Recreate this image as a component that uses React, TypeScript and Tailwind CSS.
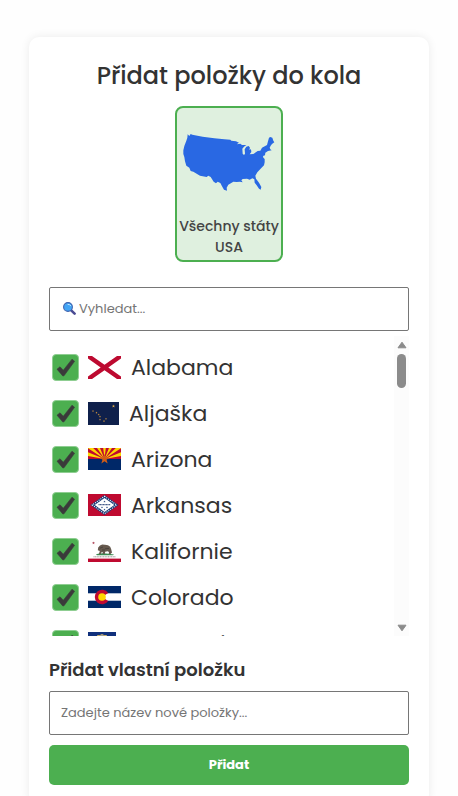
import { useState, type ReactNode } from "react";

function Star({ x, y, r, fill }: { x: number; y: number; r: number; fill: string }) {
  const points = Array.from({ length: 10 }, (_, i) => {
    const radius = i % 2 === 0 ? r : r * 0.4;
    const angle = (Math.PI / 5) * i - Math.PI / 2;
    return `${(x + radius * Math.cos(angle)).toFixed(2)},${(y + radius * Math.sin(angle)).toFixed(2)}`;
  }).join(" ");
  return <polygon points={points} fill={fill} />;
}

function Alabama() {
  return (
    <svg viewBox="0 0 33 23" className="h-[23px] w-[33px]" aria-hidden="true">
      <rect width="33" height="23" fill="#fff" />
      <path d="M0 0H4L16.5 8.8 29 0H33V2.6L20.3 11.5 33 20.4V23H29L16.5 14.2 4 23H0V20.4L12.7 11.5 0 2.6Z" fill="#bd0a30" />
    </svg>
  );
}

function Alaska() {
  const stars = [[5, 9], [8.5, 10.7], [10.7, 12.5], [12, 14.5], [12, 17.5], [18, 16.8], [16, 19.2]];
  return (
    <svg viewBox="0 0 31 23" className="h-[23px] w-[31px]" aria-hidden="true">
      <rect width="31" height="23" fill="#0f204b" />
      {stars.map(([x, y]) => (
        <Star key={`${x}-${y}`} x={x} y={y} r={1.1} fill="#d99a3c" />
      ))}
      <Star x={25.5} y={4.2} r={1.6} fill="#f0b84a" />
    </svg>
  );
}

function Arizona() {
  return (
    <svg viewBox="0 0 33 22" className="h-[22px] w-[33px]" aria-hidden="true">
      <rect width="33" height="11" fill="#bf0a30" />
      <path
        d="M16.5 11L0 8V4.2ZM16.5 11L0 .3V0H5.2ZM16.5 11L9 0H12ZM16.5 11L15.2 0H17.8ZM16.5 11L21 0H24ZM16.5 11L27.8 0H33V.3ZM16.5 11L33 4.2V8Z"
        fill="#fed700"
      />
      <rect y="11" width="33" height="11" fill="#002868" />
      <Star x={16.5} y={11.2} r={5.4} fill="#ce5c17" />
    </svg>
  );
}

function Arkansas() {
  return (
    <svg viewBox="0 0 33 22" className="h-[22px] w-[33px]" aria-hidden="true">
      <rect width="33" height="22" fill="#bf0a30" />
      <path d="M16.5 1L30.5 11 16.5 21 2.5 11Z" fill="#1c3c78" />
      <path d="M16.5 2.3L28.7 11 16.5 19.7 4.3 11Z" fill="none" stroke="#fff" strokeWidth="1.1" strokeDasharray="1 1.2" />
      <path d="M16.5 4L26.3 11 16.5 18 6.7 11Z" fill="#fff" />
      <path d="M10.5 10.7H22.5" stroke="#4a5f8c" strokeWidth="1.2" strokeDasharray="1.2 .3" />
      <Star x={16.5} y={7.6} r={1.2} fill="#1c3c78" />
      <Star x={14} y={13.3} r={1.1} fill="#1c3c78" />
      <Star x={19} y={13.3} r={1.1} fill="#1c3c78" />
      <Star x={16.5} y={15.5} r={1.1} fill="#1c3c78" />
    </svg>
  );
}

function California() {
  return (
    <svg viewBox="0 0 33 22" className="h-[22px] w-[33px]" aria-hidden="true">
      <rect width="33" height="22" fill="#fff" />
      <Star x={5.5} y={3} r={1.5} fill="#a3243b" />
      <path d="M8 14.2Q13 12.8 18 13.5T26 14.4L25 15.2H9Z" fill="#3c8a52" />
      <path
        d="M9.8 10.2L10.2 7.4 12 5.6 14.2 4.6 17 4.7 20 5.2 22.2 6.8 23.2 9.2 24 12.6 22.5 14H20.7L21 12 19.6 11.2 17.2 11.8 16.8 14H14.6L14.8 12 13.2 12.4 12.8 14.2H10.8L11.8 11Z"
        fill="#66594e"
      />
      <path d="M12 8.2L15 7M17 8.8L21 8.4M14 10H17" stroke="#3d3a35" strokeWidth=".7" />
      <path d="M5.5 16.8H27.5" stroke="#6d6561" strokeWidth="1" strokeDasharray="1.1 .5" opacity=".7" />
      <rect y="18.6" width="33" height="3.4" fill="#bf0a30" />
    </svg>
  );
}

function Colorado() {
  return (
    <svg viewBox="0 0 33 22" className="h-[22px] w-[33px]" aria-hidden="true">
      <rect width="33" height="22" fill="#002868" />
      <rect y="7.3" width="33" height="7.4" fill="#fff" />
      <path d="M20.2 7A7.3 7.3 0 1 0 20.2 15L14 11Z" fill="#bf0a30" />
      <circle cx="14" cy="11" r="3.8" fill="#ffd700" />
    </svg>
  );
}

function Connecticut() {
  return (
    <svg viewBox="0 0 28 22" className="h-[22px] w-[28px]" aria-hidden="true">
      <rect width="28" height="22" fill="#10307c" />
      <path d="M9.5 3.5Q12 4 14 2.5 16 4 18.5 3.5L19 11Q18 15 14 17 10 15 9 11Z" fill="#8f9bb5" stroke="#c9ae62" />
      <path d="M12 8H16M11 12H17" stroke="#4d7b3c" strokeWidth="2" />
      <path d="M6 18Q14 21 22 18" stroke="#fff" fill="none" />
    </svg>
  );
}

const states: { name: string; flag: ReactNode }[] = [
  { name: "Alabama", flag: <Alabama /> },
  { name: "Aljaška", flag: <Alaska /> },
  { name: "Arizona", flag: <Arizona /> },
  { name: "Arkansas", flag: <Arkansas /> },
  { name: "Kalifornie", flag: <California /> },
  { name: "Colorado", flag: <Colorado /> },
  { name: "Connecticut", flag: <Connecticut /> },
];

function StateRow({ name, flag }: { name: string; flag: ReactNode }) {
  const [checked, setChecked] = useState(true);
  return (
    <li>
      <label className="flex h-[46px] items-center pl-[3px] text-[22px]">
        <span className="grid shrink-0">
          <input
            type="checkbox"
            checked={checked}
            onChange={(e) => setChecked(e.target.checked)}
            className="peer col-start-1 row-start-1 size-[27px] appearance-none rounded-[4px] border border-[#8fce92] bg-white checked:bg-[#4caf50]"
          />
          <svg
            viewBox="0 0 27 27"
            className="pointer-events-none invisible col-start-1 row-start-1 size-[27px] peer-checked:visible"
            aria-hidden="true"
          >
            <path d="M5 15.2L8 12.8 11.3 16.2 20 5.2 22.6 7.3 12 21.8 10.8 22Z" fill="#3a3a3a" stroke="#3a3a3a" strokeWidth=".6" strokeLinejoin="round" />
          </svg>
        </span>
        <span className="ml-[9px] mr-[10px] shrink-0">{flag}</span>
        {name}
      </label>
    </li>
  );
}

function UsaMap() {
  return (
    <svg viewBox="65 111 288 180" className="h-[60px] w-[96px]" aria-hidden="true">
      <path
        d="M85 118L90 123 94 117 99 119 130 125 165 130 195 133 213 134 216 137 230 139 239 143 232 148 243 146 248 150 261 150 254 155 249 161 250 176 254 180 257 176 256 163 261 155 268 153 272 158 270 164 275 163 276 171 271 178 282 177 295 168 303 167 308 158 323 150 326 139 329 128 333 126 339 128 342 137 345 142 338 147 334 152 331 158 333 163 337 166 326 168 318 173 317 181 311 183 312 188 316 192 316 202 314 211 306 219 294 232 288 242 290 251 299 263 306 276 304 284 299 281 292 271 286 263 285 253 279 250 271 254 263 251 250 252 246 256 250 262 242 260 232 261 222 260 207 269 202 278 203 287 194 284 188 274 183 264 175 260 170 265 163 260 154 246 147 242 142 246 122 242 102 230 94 228 90 218 81 212 77 199 75 186 72 177 72 166 75 153 81 137 84 128Z"
        fill="#2968e3"
      />
    </svg>
  );
}

function Magnifier() {
  return (
    <svg viewBox="0 0 14 14" className="size-[14px]" aria-hidden="true">
      <path d="M9.2 8.4L12.6 11.6" stroke="#4b4b93" strokeWidth="2.6" strokeLinecap="round" />
      <circle cx="6" cy="5" r="4.4" fill="#42a5f5" stroke="#3f62ad" strokeWidth="1.1" />
      <path d="M6 2.3Q8 2.1 8.8 3.8" stroke="#c2e8ff" strokeWidth="1" fill="none" strokeLinecap="round" />
    </svg>
  );
}

function ScrollTrack() {
  return (
    <div className="flex w-[15px] shrink-0 flex-col items-center bg-[#fcfcfc] pt-[5px] pb-1" aria-hidden="true">
      <svg viewBox="0 0 10 8" className="h-2 w-2.5">
        <path d="M5 1.2L9 6.8H1Z" fill="#8b8b8b" stroke="#8b8b8b" strokeLinejoin="round" />
      </svg>
      <div className="mt-[5px] h-[34px] w-[9px] rounded-full bg-[#8b8b8b]" />
      <svg viewBox="0 0 10 8" className="mt-auto h-2 w-2.5">
        <path d="M5 6.8L9 1.2H1Z" fill="#8b8b8b" stroke="#8b8b8b" strokeLinejoin="round" />
      </svg>
    </div>
  );
}

const field =
  "h-11 w-full rounded-[2px] border border-[#767676] bg-white text-[13px] text-[#333] outline-none placeholder:text-[#757575]";

export default function App() {
  return (
    <main className="min-h-screen bg-[#fefefe] px-[29px] pt-[37px] pb-8 font-['Poppins','Inter','Noto_Sans',sans-serif] text-[#333]">
      <section className="mx-auto flex max-w-[600px] flex-col rounded-[10px] bg-white p-5 shadow-[0_0_10px_rgba(0,0,0,0.08)]">
        <h1 className="text-center text-2xl leading-[38px] font-medium">Přidat položky do kola</h1>

        <button
          type="button"
          className="mt-[11px] w-[108px] self-center rounded-lg border-2 border-[#4caf50] bg-[#dff0df] py-[2px] text-sm leading-[21px] font-medium text-[#444]"
        >
          <span className="flex h-[104px] items-center justify-center">
            <UsaMap />
          </span>
          <span className="mt-[2px] block">Všechny státy USA</span>
        </button>

        <div className="relative mt-[25px]">
          <input type="search" aria-label="Vyhledat" placeholder="Vyhledat..." className={`${field} pr-3 pl-[29px]`} />
          <span className="pointer-events-none absolute inset-y-0 left-[13px] flex items-center">
            <Magnifier />
          </span>
        </div>

        <div className="mt-[5px] flex h-[300px]">
          <ul className="min-w-0 flex-1 overflow-y-auto pt-2 [scrollbar-width:none]">
            {states.map((state) => (
              <StateRow key={state.name} {...state} />
            ))}
          </ul>
          <ScrollTrack />
        </div>

        <form onSubmit={(e) => e.preventDefault()} className="mt-5 flex flex-col">
          <label htmlFor="new-item" className="text-lg leading-7 font-semibold">
            Přidat vlastní položku
          </label>
          <input id="new-item" type="text" placeholder="Zadejte název nové položky..." className={`${field} mt-[7px] px-[11px]`} />
          <button type="submit" className="mt-2.5 h-10 rounded-[5px] bg-[#4caf50] text-[13px] font-bold text-white">
            Přidat
          </button>
        </form>
      </section>
    </main>
  );
}
